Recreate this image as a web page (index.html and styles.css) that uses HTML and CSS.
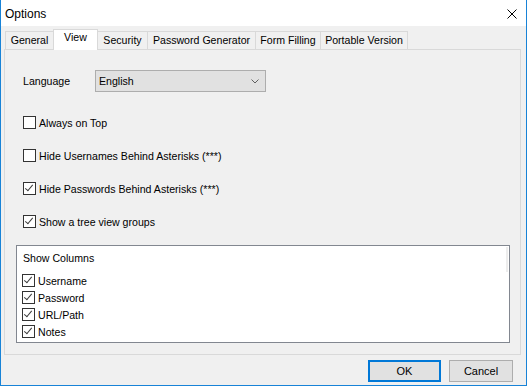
FILE: index.html
```html
<!DOCTYPE html>
<html lang="en">
  <head>
    <meta charset="UTF-8" />
    <title>Options</title>
    <link rel="stylesheet" href="styles.css">
  </head>
  <body>
    <div class="window">
      <div class="titlebar">
        <span class="title">Options</span>
        <svg class="close" width="10" height="10" viewBox="0 0 10 10">
          <path d="M0.5 0.5 L9.5 9.5 M9.5 0.5 L0.5 9.5" stroke="#000" stroke-width="1" fill="none" />
        </svg>
      </div>

      <div class="client">
        <div class="tabs">
          <div class="tab tab-general">General</div>
          <div class="tab tab-view selected">View</div>
          <div class="tab tab-security">Security</div>
          <div class="tab tab-generator">Password Generator</div>
          <div class="tab tab-filling">Form Filling</div>
          <div class="tab tab-portable">Portable Version</div>
        </div>

        <div class="page">
          <div class="lang-row">
            <span class="lang-label">Language</span>
            <div class="combo">
              <span>English</span>
              <svg width="8" height="5" viewBox="0 0 8 5">
                <path d="M0.5 0.5 L4 4 L7.5 0.5" stroke="#606060" fill="none" />
              </svg>
            </div>
          </div>

          <div class="check-row first"><span class="box"></span>Always on Top</div>
          <div class="check-row"><span class="box"></span>Hide Usernames Behind Asterisks (***)</div>
          <div class="check-row"><span class="box checked"></span>Hide Passwords Behind Asterisks (***)</div>
          <div class="check-row"><span class="box checked"></span>Show a tree view groups</div>

          <div class="columns">
            <div class="columns-title">Show Columns</div>
            <div class="col-item"><span class="box checked"></span>Username</div>
            <div class="col-item"><span class="box checked"></span>Password</div>
            <div class="col-item"><span class="box checked"></span>URL/Path</div>
            <div class="col-item"><span class="box checked"></span>Notes</div>
            <div class="scroll-thumb"></div>
          </div>
        </div>

        <div class="buttons">
          <button class="btn default">OK</button>
          <button class="btn cancel">Cancel</button>
        </div>
      </div>
    </div>
  </body>
</html>
```

FILE: styles.css
```css
body {
  margin: 0;
  font-family: "Liberation Sans", Arial, sans-serif;
  font-size: 10.6px;
  color: #000;
  background: #f0f0f0;
}

.window {
  width: 527px;
  height: 386px;
  box-sizing: border-box;
  border: 1px solid #1883d7;
  border-top: none;
  background: #f0f0f0;
  display: flex;
  flex-direction: column;
}

.titlebar {
  height: 26px;
  background: #ffffff;
  display: flex;
  align-items: center;
  justify-content: space-between;
  padding: 0 9px 0 4px;
  flex-shrink: 0;
}

.title {
  font-size: 12px;
  padding-top: 1px;
}

.close {
  display: block;
  margin-top: 1px;
}

.client {
  flex: 1;
  display: flex;
  flex-direction: column;
  padding: 3px 5px 0 3px;
}

.tabs {
  display: flex;
  align-items: flex-end;
  height: 20px;
  padding-left: 1px;
  position: relative;
  z-index: 1;
}

.tab {
  height: 18px;
  box-sizing: border-box;
  border: 1px solid #d9d9d9;
  border-bottom: none;
  margin-right: -1px;
  line-height: 17px;
  text-align: center;
  background: #f0f0f0;
  white-space: nowrap;
}

.tab.selected {
  height: 21px;
  margin-bottom: -1px;
  line-height: 15px;
  background: #ffffff;
  position: relative;
  z-index: 2;
}

.tab-general { width: 49px; }
.tab-view { width: 45px; }
.tab-security { width: 51px; }
.tab-generator { width: 109px; }
.tab-filling { width: 66px; }
.tab-portable { width: 88px; }

.page {
  height: 306px;
  box-sizing: border-box;
  border: 1px solid #d9d9d9;
  padding: 20px 0 0 11px;
}

.lang-row {
  display: flex;
  align-items: center;
  margin-left: 7px;
  height: 22px;
}

.lang-label {
  width: 72px;
}

.combo {
  width: 171px;
  height: 22px;
  box-sizing: border-box;
  background: #e1e1e1;
  border: 1px solid #adadad;
  display: flex;
  align-items: center;
  justify-content: space-between;
  padding: 0 6px 0 3px;
}

.combo svg {
  display: block;
}

.check-row {
  display: flex;
  align-items: center;
  height: 13px;
  margin: 20px 0 0 7px;
}

.check-row.first {
  margin-top: 24px;
}

.box {
  width: 13px;
  height: 13px;
  box-sizing: border-box;
  border: 1px solid #333333;
  background: #ffffff;
  margin-right: 3px;
  flex-shrink: 0;
  position: relative;
}

.box.checked::after {
  content: "";
  position: absolute;
  left: 3px;
  top: 0px;
  width: 3px;
  height: 7px;
  border: solid #3c3c3c;
  border-width: 0 1px 1px 0;
  transform: rotate(40deg);
  transform-origin: center;
}

.columns {
  position: relative;
  width: 494px;
  height: 98px;
  box-sizing: border-box;
  margin-top: 17px;
  border: 1px solid #828790;
  background: #ffffff;
  padding: 6px 0 0 5px;
}

.columns-title {
  height: 13px;
  line-height: 13px;
  padding-left: 1px;
  margin-bottom: 9px;
}

.col-item {
  display: flex;
  align-items: center;
  height: 13px;
  margin-bottom: 4px;
}

.scroll-thumb {
  position: absolute;
  right: 1px;
  top: 1px;
  width: 2px;
  height: 25px;
  background: #ededed;
}

.buttons {
  display: flex;
  justify-content: flex-end;
  gap: 8px;
  margin-top: 5px;
  padding-right: 8px;
}

.btn {
  height: 22px;
  box-sizing: border-box;
  background: #e1e1e1;
  border: 1px solid #adadad;
  font-family: "Liberation Sans", Arial, sans-serif;
  font-size: 11px;
  color: #000;
  padding: 0;
}

.btn.default {
  width: 73px;
  border: 2px solid #0078d7;
}

.btn.cancel {
  width: 64px;
}
```
